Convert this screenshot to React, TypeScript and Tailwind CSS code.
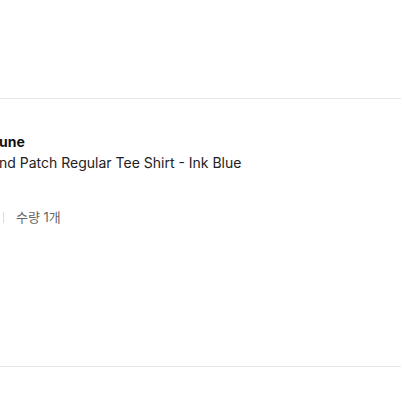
export default function App() {
  return (
    <div className="w-[402px] h-[402px] bg-white overflow-hidden" style={{ fontFamily: 'Inter, "Noto Sans CJK KR", sans-serif' }}>
      <div className="h-[99px] border-b border-[#e6e6e6] w-[401px]" />
      <div className="h-[268px] border-b border-[#e6e6e6] w-[402px] flex flex-col pt-[33px] ml-[-1px]">
        <div className="text-[14px] leading-[20px] font-bold text-[#111]">une</div>
        <div className="text-[14px] leading-[22px] text-[#222]">nd Patch Regular Tee Shirt - Ink Blue</div>
        <div className="flex items-center mt-[34px] text-[13px] leading-[18px] text-[#666]">
          <span className="w-px h-[11px] bg-[#dcdcdc] ml-[4px]" />
          <span className="ml-[12px]">수량 1개</span>
        </div>
      </div>
    </div>
  );
}
